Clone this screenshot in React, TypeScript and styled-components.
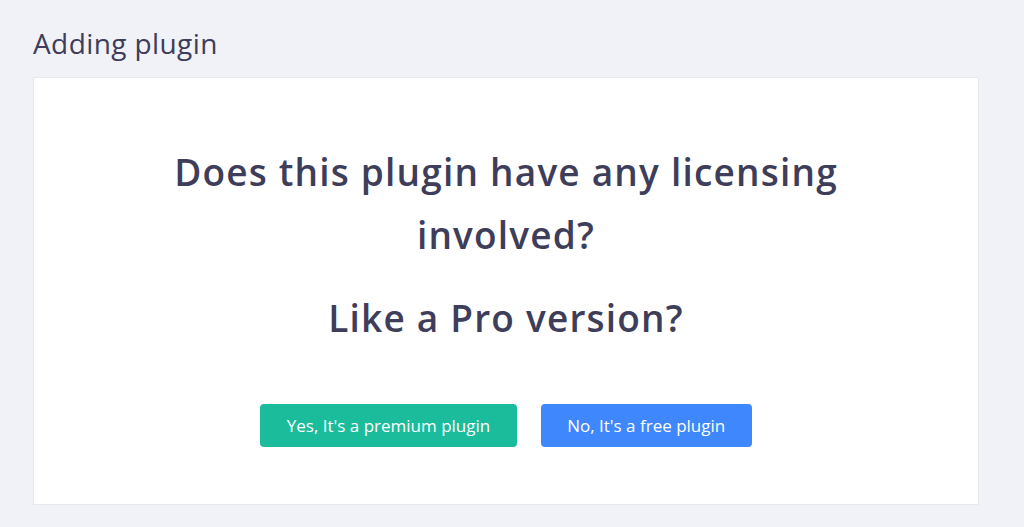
import styled, { createGlobalStyle } from 'styled-components'

const GlobalStyle = createGlobalStyle`
  html, body {
    margin: 0;
    padding: 0;
    background-color: #f1f2f7;
    font-family: 'Open Sans', 'Noto Sans', sans-serif;
  }
`

const Page = styled.div`
  width: 946px;
  padding: 24px 45px 22px 33px;
`

const Title = styled.h1`
  margin: 0 0 14px;
  font-size: 28px;
  font-weight: 400;
  letter-spacing: 0.4px;
  line-height: 39px;
  color: #3e3d5a;
`

const Card = styled.div`
  background-color: #ffffff;
  border: 1px solid #e7e8ec;
  height: 428px;
  display: flex;
  flex-direction: column;
  align-items: center;
  padding-top: 62px;
  box-sizing: border-box;
`

const Question = styled.h2`
  margin: 0;
  max-width: 720px;
  text-align: center;
  font-size: 37px;
  font-weight: 600;
  letter-spacing: 1.2px;
  line-height: 63px;
  color: #3e3d5a;
`

const SubQuestion = styled(Question)`
  margin-top: 20px;
`

const Actions = styled.div`
  display: flex;
  gap: 24px;
  margin-top: 55px;
`

const ActionButton = styled.button<{ $tone: 'green' | 'blue' }>`
  height: 43px;
  padding: 0 26.5px;
  border: none;
  border-radius: 4px;
  font-family: inherit;
  font-size: 17px;
  color: #ffffff;
  cursor: pointer;
  background-color: ${({ $tone }) => ($tone === 'green' ? '#1bbc9b' : '#3e87fc')};
`

const App = (): JSX.Element => {
  return (
    <>
      <GlobalStyle />
      <Page>
        <Title>Adding plugin</Title>
        <Card>
          <Question>Does this plugin have any licensing involved?</Question>
          <SubQuestion>Like a Pro version?</SubQuestion>
          <Actions>
            <ActionButton $tone='green'>Yes, It's a premium plugin</ActionButton>
            <ActionButton $tone='blue'>No, It's a free plugin</ActionButton>
          </Actions>
        </Card>
      </Page>
    </>
  )
}

export default App
